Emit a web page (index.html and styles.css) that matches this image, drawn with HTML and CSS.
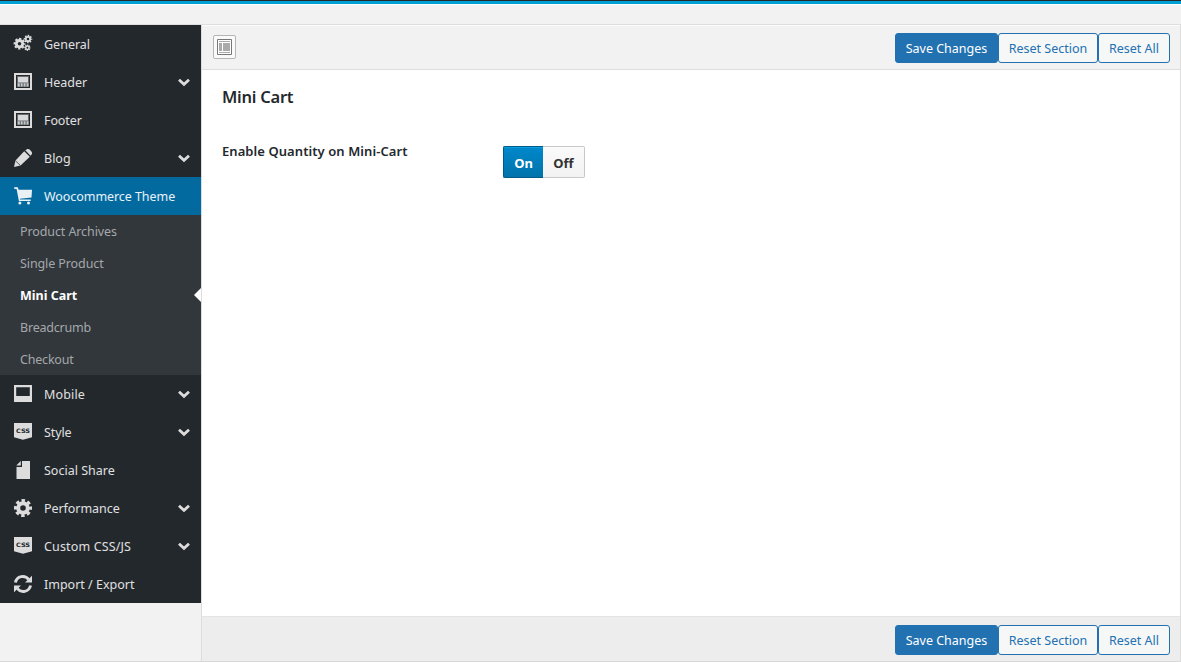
FILE: index.html
```html
<!DOCTYPE html>
<html lang="en">
<head>
<meta charset="utf-8">
<title>Theme Options</title>
<link rel="stylesheet" href="styles.css">
</head>
<body>
<svg class="defs" width="0" height="0">
  <symbol id="chev" viewBox="0 0 12 9"><path d="M1 1.800L6 6.400l5-4.600" fill="none" stroke="currentColor" stroke-width="2.800"/></symbol>
  <symbol id="layout" viewBox="0 0 18 18"><path fill="currentColor" fill-rule="evenodd" d="M0 0h18v17H0zM2 2v13h14V2z"/><path d="M3 3h12v11H3z" fill="#666b6f"/><path d="M4 4h10v5.500H4z" fill="#d8d9da"/><path d="M3.800 10.300h2v3.200h-2zm3 0h1.800v3.200H6.800zm2.900 0h1.800v3.200H9.700zm2.900 0h1.800v3.200h-1.800z" fill="#c3c5c6"/></symbol>
  <symbol id="gear" viewBox="0 0 18 18"><g fill="none" stroke="currentColor"><circle cx="9" cy="9" r="4.800" stroke-width="4"/><circle cx="9" cy="9" r="7.400" stroke-width="3.200" stroke-dasharray="3.400 2.412" stroke-dashoffset="1.700"/></g></symbol>
</svg>
<div class="topbar"></div>
<div class="panel">
  <nav class="sidebar">
    <ul class="menu">
      <li class="item"><svg class="icon" viewBox="0 0 18 18"><g fill="none" stroke="currentColor"><circle cx="5.500" cy="8.700" r="3.200" stroke-width="2.800"/><circle cx="5.500" cy="8.700" r="5" stroke-width="1.800" stroke-dasharray="2.300 1.627" stroke-dashoffset="1.150"/><circle cx="14" cy="4" r="2.200" stroke-width="1.800"/><circle cx="14" cy="4" r="3.500" stroke-width="1.500" stroke-dasharray="1.600 1.149" stroke-dashoffset=".8"/><circle cx="13.400" cy="12.700" r="1.700" stroke-width="1.500"/><circle cx="13.400" cy="12.700" r="2.600" stroke-width="1.200" stroke-dasharray="1.200 .842" stroke-dashoffset=".6"/></g></svg><span>General</span></li>
      <li class="item"><svg class="icon"><use href="#layout"/></svg><span>Header</span><svg class="chev"><use href="#chev"/></svg></li>
      <li class="item"><svg class="icon"><use href="#layout"/></svg><span class="tight">Footer</span></li>
      <li class="item"><svg class="icon" viewBox="0 0 18 18"><path fill="currentColor" d="M10.200 2.300l5.600 5.500L6.500 16.500 0 18l1.500-6.500zM11.300 1.300L12.600.4c1-.7 2.200-.5 3 .2l1.800 1.800c.8.800.9 2 .2 3l-1 1.300z"/><path d="M1.500 11.800l4.900 4.700" stroke="#23282d" stroke-width=".7"/></svg><span>Blog</span><svg class="chev"><use href="#chev"/></svg></li>
      <li class="item current"><svg class="icon" viewBox="0 0 18 18"><path fill="currentColor" d="M0 .3h3.800l.8 2.500H18l-.5 7.700L5.800 11.700l.3.900h10.600v1.500H4.900L2.600 2H.5z"/><circle cx="5.900" cy="15.900" r="1.500" fill="currentColor"/><circle cx="14.500" cy="15.900" r="1.500" fill="currentColor"/></svg><span class="tight2">Woocommerce Theme</span></li>
      <li>
        <ul class="submenu">
          <li><span class="tight">Product Archives</span></li>
          <li><span class="tight">Single Product</span></li>
          <li class="active">Mini Cart</li>
          <li><span class="tighter">Breadcrumb</span></li>
          <li><span class="tighter">Checkout</span></li>
        </ul>
      </li>
      <li class="item"><svg class="icon" viewBox="0 0 18 18"><path fill="currentColor" fill-rule="evenodd" d="M0 0h18v17H0zM2.200 2.200V11h13.600V2.200z"/></svg><span class="wide">Mobile</span><svg class="chev"><use href="#chev"/></svg></li>
      <li class="item"><svg class="icon" viewBox="0 0 18 18"><path d="M0 0h18v14.200L9 16.800 0 14.200z" fill="currentColor"/><text class="css-text" x="2" y="10" textLength="14" lengthAdjust="spacingAndGlyphs">CSS</text></svg><span class="tight">Style</span><svg class="chev"><use href="#chev"/></svg></li>
      <li class="item"><svg class="icon" viewBox="0 0 18 18"><path fill="currentColor" d="M8 0h8v18H2.500V6H8zM6.800 0v4.500H2.300z"/></svg><span>Social Share</span></li>
      <li class="item"><svg class="icon"><use href="#gear"/></svg><span class="tight2">Performance</span><svg class="chev"><use href="#chev"/></svg></li>
      <li class="item"><svg class="icon" viewBox="0 0 18 18"><path d="M0 0h18v14.200L9 16.800 0 14.200z" fill="currentColor"/><text class="css-text" x="2" y="10" textLength="14" lengthAdjust="spacingAndGlyphs">CSS</text></svg><span class="wide">Custom CSS/JS</span><svg class="chev"><use href="#chev"/></svg></li>
      <li class="item"><svg class="icon" viewBox="0 0 18 18"><path fill="none" stroke="currentColor" stroke-width="2.900" d="M1.400 7.500C3 .8 11-.3 14.600 4.500M16.600 10.500C15 17.200 7 18.300 3.400 13.500"/><path fill="currentColor" d="M18 .8v6.700h-7zM0 17.200v-6.700h7z"/></svg><span>Import / Export</span></li>
    </ul>
  </nav>
  <main class="main">
    <header class="bar">
      <button class="expand" aria-label="Expand options"><svg width="15" height="16" viewBox="0 0 15 16"><path d="M.5.500h14v15H.5z" fill="#fff" stroke="#777"/><path d="M2 2.500h11M2 13.500h11" stroke="#aaa"/><path d="M2 4h3v8H2zM6 4h7v8H6z" fill="#aaa"/></svg></button>
      <div class="actions"><button class="btn primary">Save Changes</button><button class="btn section">Reset Section</button><button class="btn all">Reset All</button></div>
    </header>
    <section class="content">
      <h2>Mini Cart</h2>
      <div class="field">
        <div class="label">Enable Quantity on Mini-Cart</div>
        <div class="switch"><span class="on">On</span><span class="off">Off</span></div>
      </div>
    </section>
    <footer class="bar bottom">
      <div class="actions"><button class="btn primary">Save Changes</button><button class="btn section">Reset Section</button><button class="btn all">Reset All</button></div>
    </footer>
  </main>
</div>
</body>
</html>
```
FILE: styles.css
```css
* { box-sizing: border-box; }
body { margin: 0; height: 662px; overflow: hidden; background: #f2f2f2; color: #23282d; font: 12.5px "Noto Sans", "Open Sans", sans-serif; display: flex; flex-direction: column; }
.defs { position: absolute; }
ul { list-style: none; margin: 0; padding: 0; }
.topbar { height: 25px; flex: none; border-top: 1px solid #23282d; border-bottom: 1px solid #dedede; box-shadow: inset 0 3px #00a0d2, inset 0 4px #fff; }
.panel { display: flex; height: 637px; border-right: 1px solid #dedede; border-bottom: 1px solid #d8d8d8; }
.sidebar { width: 201px; flex: none; }
.menu { background: #23282d; color: #e0e0e0; }
.item { height: 38px; display: flex; align-items: center; padding: 0 11px 0 14px; white-space: nowrap; }
.item.current { background: #036a9f; color: #e8f2f8; }
.icon { width: 18px; height: 18px; margin-right: 12px; flex: none; color: #dcdcdc; overflow: visible; }
.current .icon { color: #eaf1f5; }
.css-text { font: bold 6px "DejaVu Sans", sans-serif; fill: #23282d; }
.chev { width: 12px; height: 9px; margin-left: auto; color: #dcdcdc; }
.tight { letter-spacing: -0.1px; }
.tight2 { letter-spacing: -0.06px; }
.tighter { letter-spacing: -0.2px; }
.wide { letter-spacing: 0.15px; }
.submenu { background: #32373c; color: #a5a8ab; }
.submenu li { height: 32px; line-height: 32px; padding: 1px 0 0 20px; position: relative; }
.submenu .active { color: #fff; font-weight: 700; }
.active::after { content: ""; position: absolute; right: 0; top: 9px; border: 7px solid transparent; border-left: 0; border-right-color: #fff; }
.main { flex: 1; display: flex; flex-direction: column; border-left: 1px solid #dcdcdc; background: #fff; }
.bar { height: 45px; flex: none; display: flex; align-items: center; justify-content: space-between; padding: 1px 10px 0 11px; background: #f2f2f2; border-bottom: 1px solid #dedede; box-shadow: inset 0 1px #fcfcfc; }
.bottom { justify-content: flex-end; background: #ededed; border-top: 1px solid #e4e4e4; border-bottom: 0; box-shadow: none; padding-top: 2px; }
.expand { width: 23px; height: 24px; margin-bottom: 2px; padding: 0; display: flex; align-items: center; justify-content: center; border: 1px solid #b5b5b5; border-radius: 2px; background: #fafafa; }
.actions { display: flex; }
.btn { height: 30px; padding: 1px 0 0; border: 1px solid #2271b1; border-radius: 3px; background: #f6f7f7; color: #2271b1; font: 12.5px "Noto Sans", sans-serif; }
.bottom .btn { padding-top: 0; }
.primary { width: 103px; background: #2271b1; color: #fff; }
.section { width: 100px; }
.all { width: 72px; }
.content { flex: 1; padding: 16px 20px; }
h2 { margin: 0; font-size: 16.5px; line-height: 22px; font-weight: 600; letter-spacing: -0.25px; }
.field { display: flex; margin-top: 38px; }
.label { width: 281px; line-height: 10px; font-size: 13px; font-weight: 600; letter-spacing: 0.07px; }
.switch { display: flex; height: 32px; font-size: 13px; font-weight: 700; line-height: 33px; text-align: center; }
.on { width: 40px; color: #fff; background: linear-gradient(#0088cc, #0073aa); border: 1px solid #005a87; border-right: 0; border-radius: 2px 0 0 2px; box-shadow: inset 0 1px #0aa0e0; }
.off { width: 42px; color: #333; background: linear-gradient(#fafafa, #f2f2f2); border: 1px solid #c8c8c8; border-left: 0; border-radius: 0 2px 2px 0; }
```
